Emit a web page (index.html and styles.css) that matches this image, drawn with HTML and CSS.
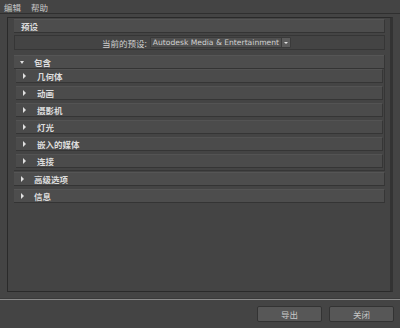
FILE: index.html
```html
<!DOCTYPE html>
<html>
<head>
<meta charset="utf-8">
<link rel="stylesheet" href="styles.css">
</head>
<body>
<div class="menubar">
  <span class="menu">编辑</span>
  <span class="menu">帮助</span>
</div>
<div class="panel">
  <div class="group">
    <div class="header plain">预设</div>
    <div class="preset-row">
      <span class="label">当前的预设:</span>
      <div class="dropdown">
        <span class="dd-text">Autodesk Media &amp; Entertainment</span>
        <span class="dd-btn"><span class="tri-down small"></span></span>
      </div>
    </div>
  </div>
  <div class="group include">
    <div class="header"><span class="tri-down"></span><span class="htext">包含</span></div>
    <div class="rows">
      <div class="row"><span class="tri-right"></span><span class="rtext">几何体</span></div>
      <div class="row"><span class="tri-right"></span><span class="rtext">动画</span></div>
      <div class="row"><span class="tri-right"></span><span class="rtext">摄影机</span></div>
      <div class="row"><span class="tri-right"></span><span class="rtext">灯光</span></div>
      <div class="row"><span class="tri-right"></span><span class="rtext">嵌入的媒体</span></div>
      <div class="row"><span class="tri-right"></span><span class="rtext">连接</span></div>
    </div>
  </div>
  <div class="header top first"><span class="tri-right"></span><span class="htext">高级选项</span></div>
  <div class="header top"><span class="tri-right"></span><span class="htext">信息</span></div>
</div>
<div class="separator"></div>
<div class="footer">
  <button class="btn">导出</button>
  <button class="btn">关闭</button>
</div>
</body>
</html>
```
FILE: styles.css
```css
html, body {
  margin: 0;
  padding: 0;
  background: #444444;
  width: 400px;
  height: 328px;
  overflow: hidden;
  font-family: "Noto Sans CJK SC", "Liberation Sans", sans-serif;
  font-size: 8.5px;
  color: #d4d4d4;
}

.menubar {
  display: flex;
  align-items: center;
  padding-left: 4px;
  gap: 10px;
  border-bottom: 1px solid #2f2f2f;
  box-sizing: border-box;
  height: 14px;
}
.menu {
  color: #c8c8c8;
  line-height: 12px;
}

.panel {
  margin: 3px 7px 0 7px;
  height: 275px;
  border: 1px solid #2a2a2a;
  border-right: 3px solid #333333;
  box-sizing: border-box;
  padding: 1px 5px 0 6px;
  display: flex;
  flex-direction: column;
}

.header {
  height: 14px;
  flex: none;
  box-sizing: border-box;
  background: #4d4d4d;
  border-top: 1px solid #555555;
  border-bottom: 1px solid #343434;
  border-right: 1px solid #363636;
  display: flex;
  align-items: center;
  font-weight: bold;
  color: #dcdcdc;
  line-height: 12px;
}
.header.plain {
  padding-left: 7px;
}
.header.top {
  margin-top: 3px;
}
.header.top.first {
  margin-top: 1px;
}

.preset-row {
  margin-top: 2px;
  height: 15px;
  box-sizing: border-box;
  border: 1px solid #363636;
  display: flex;
  align-items: center;
  justify-content: center;
  padding-right: 6px;
}
.label {
  color: #cfcfcf;
  margin-right: 3px;
}
.dropdown {
  display: flex;
  height: 11px;
  box-sizing: border-box;
  background: #4f4f4f;
  border: 1px solid #3a3a3a;
  border-radius: 1px;
}
.dd-text {
  font-family: "DejaVu Sans", sans-serif;
  font-size: 7.6px;
  color: #cfcfcf;
  padding: 0 2px 0 2px;
  line-height: 9px;
}
.dd-btn {
  width: 8px;
  background: #5b5b5b;
  border-left: 1px solid #3a3a3a;
  display: flex;
  align-items: center;
  justify-content: center;
}

.tri-down {
  width: 0;
  height: 0;
  border-left: 2.5px solid transparent;
  border-right: 2.5px solid transparent;
  border-top: 3px solid #e0e0e0;
  margin-left: 6px;
  margin-right: 10px;
}
.tri-down.small {
  margin: 0;
  border-left-width: 2px;
  border-right-width: 2px;
  border-top-width: 2px;
}
.tri-right {
  width: 0;
  height: 0;
  border-top: 3px solid transparent;
  border-bottom: 3px solid transparent;
  border-left: 3px solid #e0e0e0;
  margin-left: 7px;
  margin-right: 10px;
}

.include {
  margin-top: 5px;
  border-bottom: 1px solid #363636;
  border-right: 1px solid #363636;
}
.include .header {
  border-right: none;
}
.rows {
  padding: 0 1px 2px 2px;
  display: flex;
  flex-direction: column;
  gap: 3px;
}
.row {
  height: 14px;
  box-sizing: border-box;
  background: #4b4b4b;
  border-top: 1px solid #535353;
  border-bottom: 1px solid #353535;
  border-right: 1px solid #363636;
  display: flex;
  align-items: center;
  font-weight: bold;
  color: #dcdcdc;
}
.row .tri-right {
  margin-left: 7px;
  margin-right: 11px;
}

.separator {
  margin-top: 6px;
  height: 1px;
  background: #8a8a8a;
  border-top: 1px solid #3a3a3a;
}

.footer {
  display: flex;
  justify-content: flex-end;
  gap: 7px;
  padding: 6px 6px 0 0;
}
.btn {
  width: 65px;
  height: 16px;
  padding: 0;
  background: #575757;
  border: 1px solid #333333;
  border-radius: 2px;
  color: #c8c8c8;
  font-family: "Noto Sans CJK SC", sans-serif;
  font-size: 8.5px;
  line-height: 12px;
}
```
